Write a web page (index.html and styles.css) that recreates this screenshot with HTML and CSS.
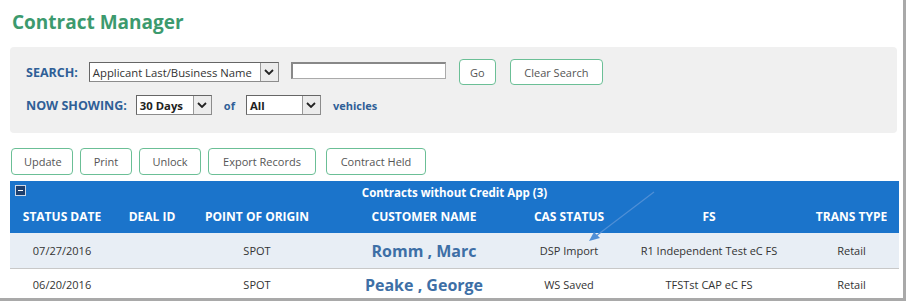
FILE: index.html
```html
<!DOCTYPE html>
<html lang="en">

<head>
    <meta charset="UTF-8">
    <title>Contract Manager</title>
    <link rel="stylesheet" href="styles.css">
</head>

<body>

    <div class="frame">

        <h1 class="naslov">Contract Manager</h1>

        <div class="filter">
            <div class="red">
                <span class="lab">SEARCH:</span>
                <span class="sel sel-search">Applicant Last/Business Name<i class="str"></i></span>
                <span class="txt"></span>
                <button class="dug go">Go</button>
                <button class="dug clear">Clear Search</button>
            </div>
            <div class="red">
                <span class="lab">NOW SHOWING:</span>
                <span class="sel sel-days">30 Days<i class="str"></i></span>
                <span class="lab mali of">of</span>
                <span class="sel sel-all">All<i class="str"></i></span>
                <span class="lab mali">vehicles</span>
            </div>
        </div>

        <div class="akcije">
            <button class="dug">Update</button>
            <button class="dug">Print</button>
            <button class="dug">Unlock</button>
            <button class="dug">Export Records</button>
            <button class="dug">Contract Held</button>
        </div>

        <table class="tabela">
            <colgroup>
                <col style="width:104px">
                <col style="width:76px">
                <col style="width:134px">
                <col style="width:200px">
                <col style="width:90px">
                <col style="width:190px">
                <col style="width:95px">
            </colgroup>
            <tr class="grupa">
                <td colspan="7"><span class="minus"></span>Contracts without Credit App (3)</td>
            </tr>
            <tr class="zaglavlje">
                <th>STATUS DATE</th>
                <th>DEAL ID</th>
                <th>POINT OF ORIGIN</th>
                <th>CUSTOMER NAME</th>
                <th>CAS STATUS</th>
                <th>FS</th>
                <th>TRANS TYPE</th>
            </tr>
            <tr class="neparan">
                <td>07/27/2016</td>
                <td></td>
                <td>SPOT</td>
                <td class="ime">Romm , Marc</td>
                <td>DSP Import</td>
                <td>R1 Independent Test eC FS</td>
                <td>Retail</td>
            </tr>
            <tr class="paran">
                <td>06/20/2016</td>
                <td></td>
                <td>SPOT</td>
                <td class="ime">Peake , George</td>
                <td>WS Saved</td>
                <td>TFSTst CAP eC FS</td>
                <td>Retail</td>
            </tr>
        </table>

        <svg class="strelica" width="80" height="60" viewBox="0 0 80 60">
            <line x1="70" y1="2" x2="12" y2="46" stroke="#4f8fd6" stroke-width="1.2"/>
            <polygon points="5,51 10,42 16,48" fill="#4f8fd6"/>
        </svg>

    </div>

</body>

</html>
```

FILE: styles.css
```css
body {
    margin: 0;
    background-color: #fff;
    font-family: "Open Sans", "DejaVu Sans", sans-serif;
    color: #333;
}

.frame {
    position: relative;
    width: 906px;
    height: 301px;
    box-sizing: border-box;
    border-right: 3px solid #a9a9a9;
    border-bottom: 3px solid #a9a9a9;
    padding: 8px 0 0 10px;
    overflow: hidden;
}

.naslov {
    margin: 0 0 0 2px;
    font-size: 19px;
    line-height: 28px;
    font-weight: 700;
    color: #3c9a6e;
}

.filter {
    margin-top: 11px;
    width: 887px;
    height: 86px;
    background-color: #f0f0f0;
    border-radius: 4px;
    padding: 12px 16px 0 16px;
    box-sizing: border-box;
}

.red {
    display: flex;
    align-items: center;
    height: 26px;
    margin-bottom: 7px;
}

.lab {
    font-size: 12.5px;
    font-weight: 700;
    color: #2f5f97;
    margin-right: 9px;
}

.red:first-child .lab {
    margin-right: 11px;
}

.lab.mali {
    font-size: 11px;
}

.lab.of {
    margin-left: 12px;
    margin-right: 11px;
}

.sel {
    display: flex;
    align-items: center;
    justify-content: space-between;
    height: 20px;
    box-sizing: border-box;
    background-color: #fff;
    border: 1px solid #8c8c8c;
    border-left-color: #666;
    border-top-color: #666;
    font-size: 11.3px;
    color: #333;
    padding-left: 3px;
}

.sel-search {
    width: 190px;
    margin-right: 12px;
}

.sel-days {
    width: 76px;
    font-weight: 700;
    color: #222;
}

.sel-all {
    width: 75px;
    font-weight: 700;
    color: #222;
    margin-right: 12px;
}

.str {
    width: 18px;
    height: 18px;
    box-sizing: border-box;
    border-left: 1px solid #999;
    background: #ececec url("data:image/svg+xml,%3Csvg xmlns='http://www.w3.org/2000/svg' width='10' height='6'%3E%3Cpath d='M1 1l4 4 4-4' fill='none' stroke='%23222' stroke-width='1.8'/%3E%3C/svg%3E") no-repeat center;
}

.txt {
    width: 155px;
    height: 17px;
    box-sizing: border-box;
    background-color: #fff;
    border: 1px solid #aaa;
    border-top: 2px solid #888;
    border-left: 2px solid #888;
    margin-right: 13px;
    margin-top: -3px;
}

.dug {
    height: 26px;
    background-color: #fff;
    border: 1.5px solid #6bbf96;
    border-radius: 4px;
    font-family: "Open Sans", "DejaVu Sans", sans-serif;
    font-size: 11px;
    color: #555;
    padding: 0 12px;
}

.go {
    width: 37px;
    padding: 0;
    margin-right: 14px;
}

.clear {
    width: 93px;
    padding: 0;
}

.akcije {
    display: flex;
    gap: 7px;
    margin-top: 15px;
    margin-left: 1px;
}

.akcije .dug {
    height: 27px;
}

.akcije .dug:nth-child(1) { width: 62px; }
.akcije .dug:nth-child(2) { width: 52px; }
.akcije .dug:nth-child(3) { width: 62px; }
.akcije .dug:nth-child(4) { width: 108px; }
.akcije .dug:nth-child(5) { width: 100px; margin-left: 3px; }

.tabela {
    margin-top: 6px;
    width: 889px;
    border-collapse: collapse;
    table-layout: fixed;
    text-align: center;
}

.tabela .grupa td {
    position: relative;
    height: 22px;
    padding: 0;
    background-color: #1b74cb;
    color: #fff;
    font-size: 11.5px;
    font-weight: 700;
}

.minus {
    position: absolute;
    left: 5px;
    top: 4px;
    width: 11px;
    height: 11px;
    box-sizing: border-box;
    background-color: #1d3f6e;
    border: 1px solid #cfd8e6;
}

.minus::after {
    content: "";
    position: absolute;
    left: 2px;
    top: 4px;
    width: 5px;
    height: 1px;
    background-color: #fff;
}

.zaglavlje th {
    height: 27px;
    padding: 0 0 3px 0;
    background-color: #1b74cb;
    color: #fff;
    font-size: 12px;
    font-weight: 700;
}

.tabela td {
    font-size: 11px;
    color: #333;
    padding: 0;
}

.neparan td {
    height: 35px;
    background-color: #e8eef5;
    border-bottom: 1px solid #c8c8c8;
}

.paran td {
    height: 31px;
    background-color: #fff;
}

.tabela td.ime {
    font-size: 16px;
    font-weight: 700;
    color: #3d6fa6;
}

.strelica {
    position: absolute;
    left: 584px;
    top: 190px;
}
```
